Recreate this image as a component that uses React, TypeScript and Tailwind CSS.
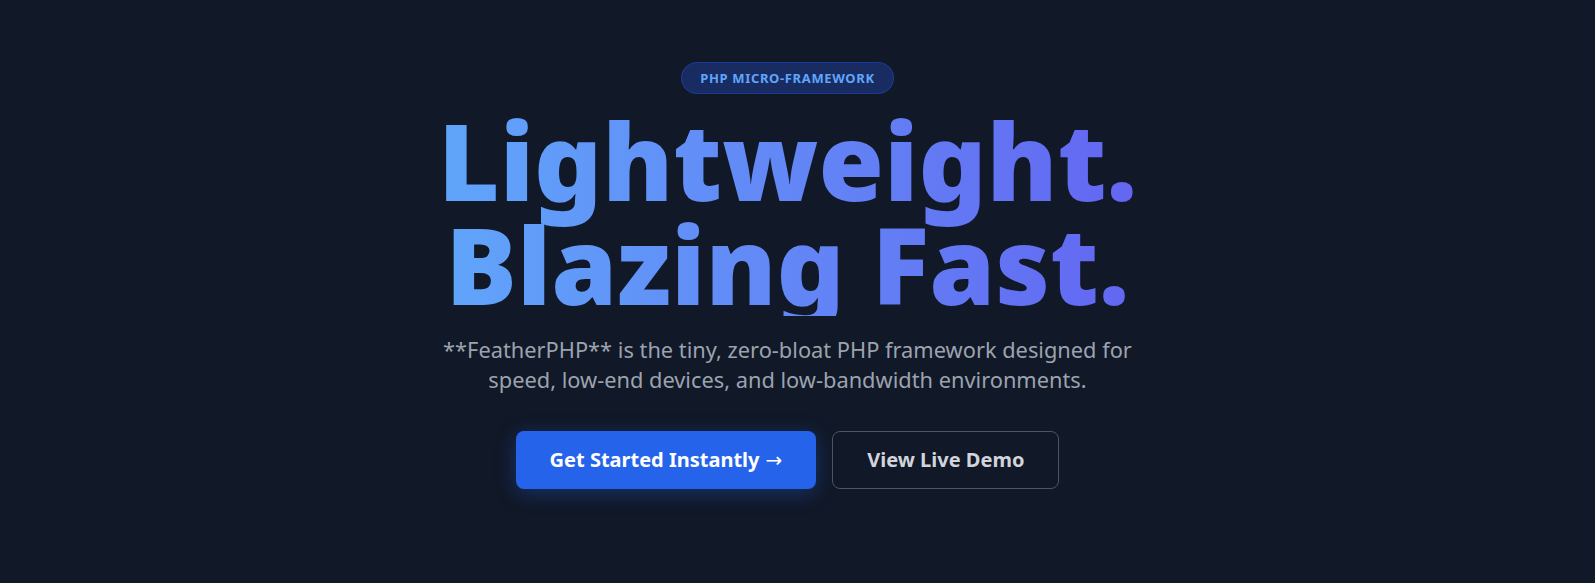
export default function App() {
  return (
    <div
      className="min-h-screen w-full bg-[#111827]"
      style={{ fontFamily: '"Noto Sans", "Open Sans", sans-serif' }}
    >
      <section className="flex flex-col items-center pt-[62px] pr-[44px] pb-24 pl-6 text-center">
        <span className="rounded-full border border-[#1e40af]/70 bg-[#1e3a8a]/60 px-[18px] py-[5px] text-[13px] leading-5 font-bold tracking-wider text-[#60a5fa] uppercase">
          PHP Micro-Framework
        </span>

        <h1 className="mt-[14px] inline-block bg-linear-to-r from-[#60a5fa] to-[#6366f1] bg-clip-text text-[106px] leading-[104px] font-black text-transparent">
          Lightweight.
          <br />
          Blazing Fast.
        </h1>

        <p className="mt-[19px] max-w-[700px] text-[21.8px] leading-[30px] text-[#9ca3af]">
          **FeatherPHP** is the tiny, zero-bloat PHP framework designed for
          speed, low-end devices, and low-bandwidth environments.
        </p>

        <div className="mt-9 flex items-center gap-4">
          <a
            href="#"
            className="inline-flex h-[58px] items-center gap-1.5 rounded-lg bg-[#2563eb] px-[34px] text-xl font-bold text-white shadow-[0_4px_20px_rgba(37,99,235,0.35)]"
          >
            Get Started Instantly
            <span className="font-normal" style={{ fontFamily: '"DejaVu Sans", sans-serif' }}>
              →
            </span>
          </a>
          <a
            href="#"
            className="inline-flex h-[58px] items-center rounded-lg border border-[#4b5563] px-[34px] text-xl font-bold text-[#d1d5db]"
          >
            View Live Demo
          </a>
        </div>
      </section>
    </div>
  );
}
